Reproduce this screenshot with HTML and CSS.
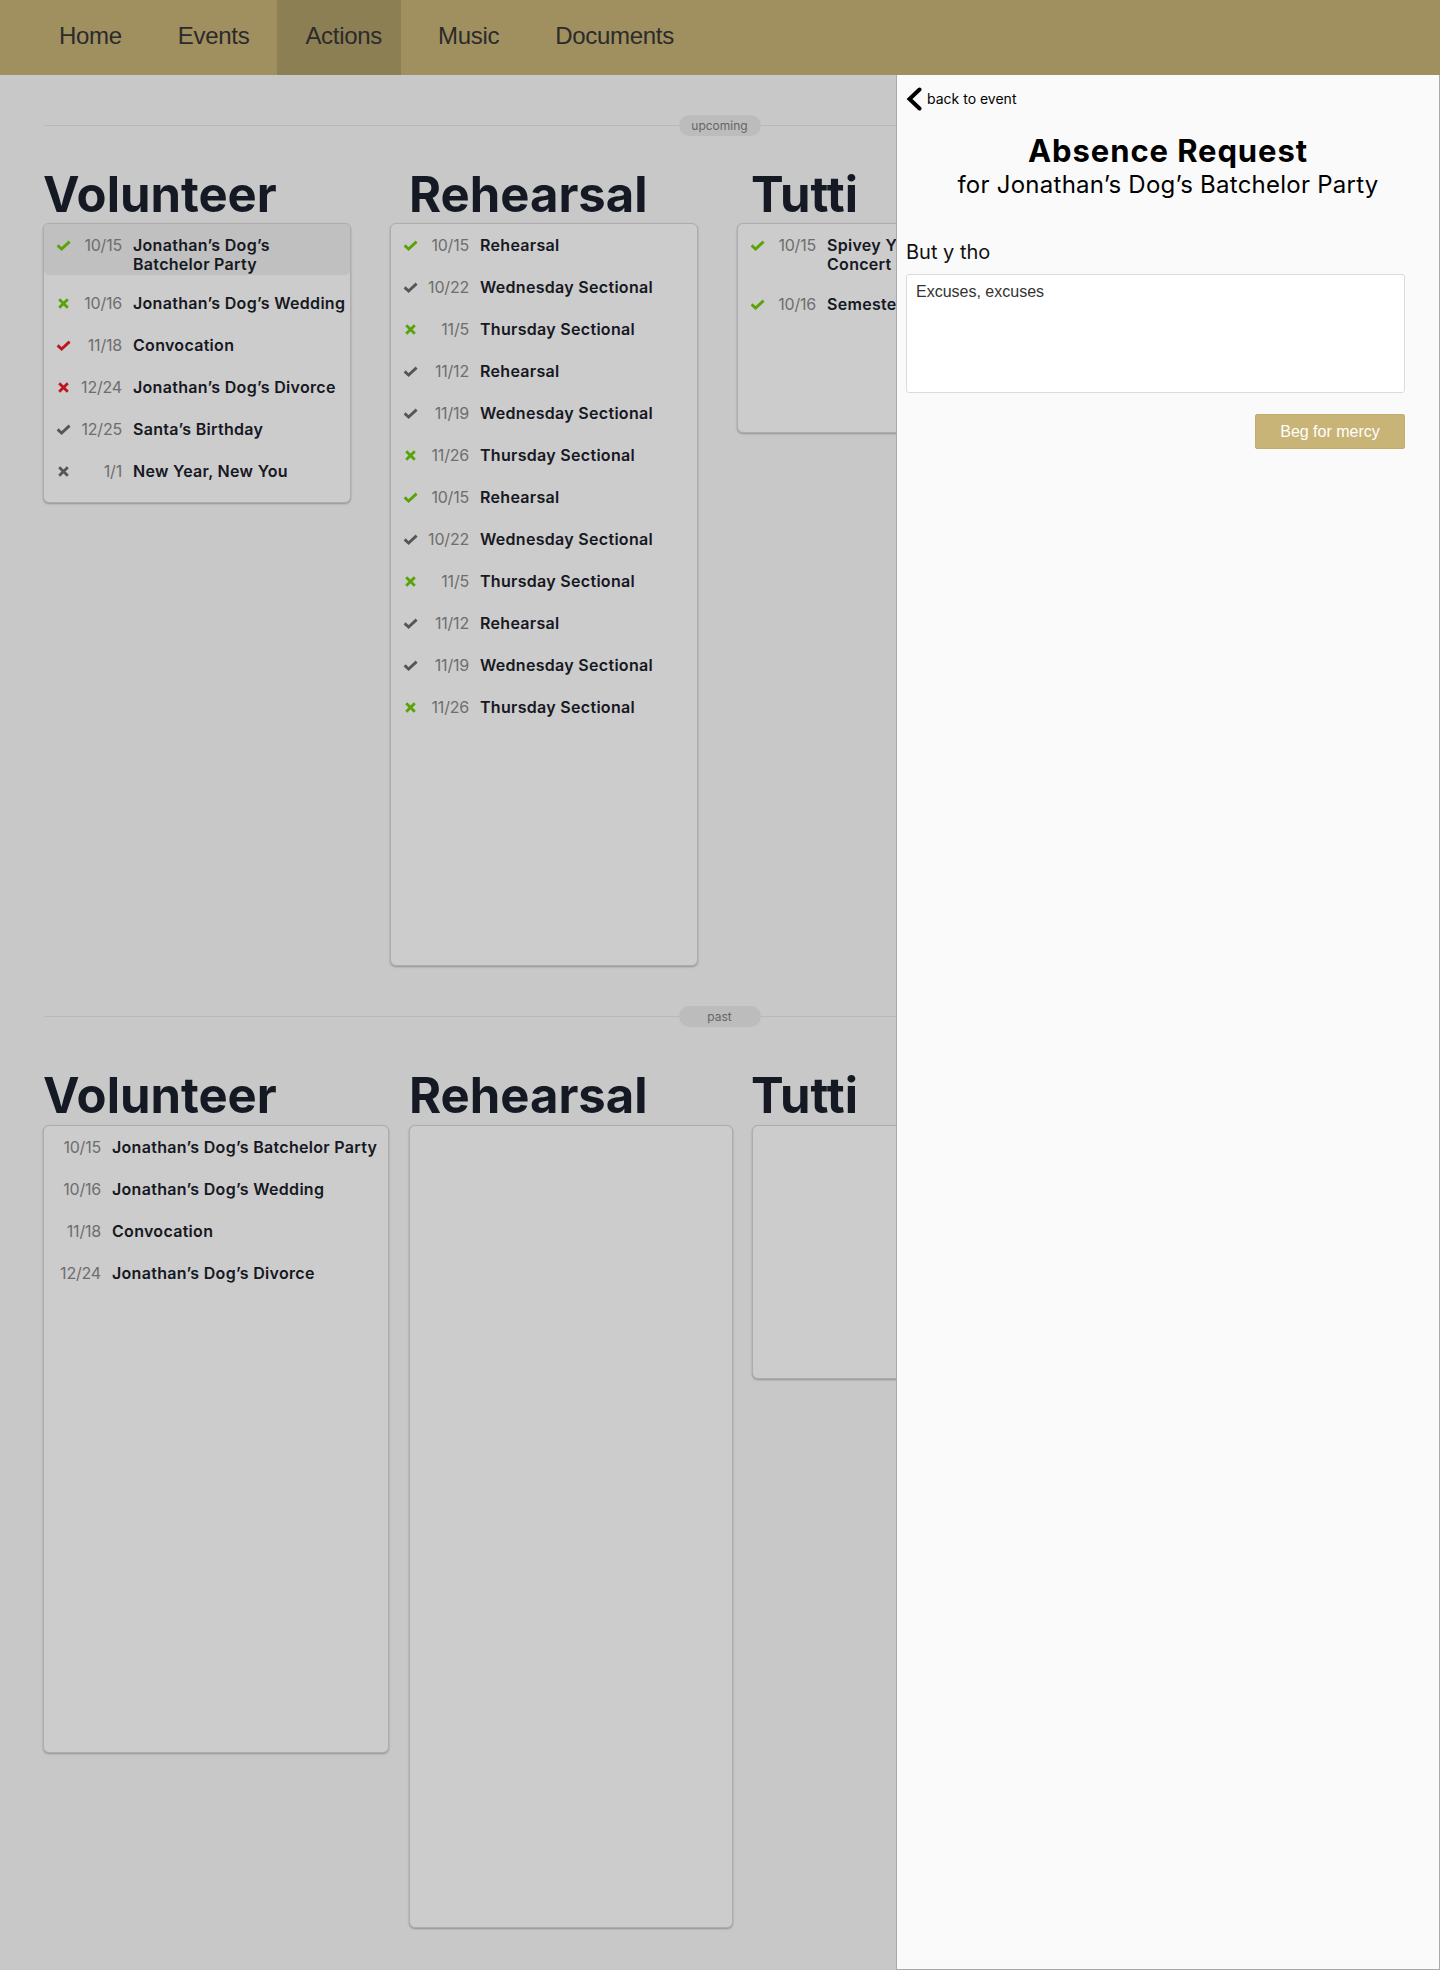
FILE: index.html
```html
<!DOCTYPE html>
<html lang="en">
<head>
<meta charset="utf-8">
<title>Actions</title>
<link rel="stylesheet" href="styles.css">
</head>
<body>
<header class="topnav">
  <nav class="topnav-links">
    <a class="topnav-link" href="#">Home</a>
    <a class="topnav-link" href="#">Events</a>
    <a class="topnav-link is-active" href="#">Actions</a>
    <a class="topnav-link" href="#">Music</a>
    <a class="topnav-link" href="#">Documents</a>
  </nav>
</header>

<main class="board">
  <section class="period">
    <div class="divider"><span class="pill">upcoming</span></div>
    <div class="headings">
      <h2 class="col-title col-title--a">Volunteer</h2>
      <h2 class="col-title col-title--b">Rehearsal</h2>
      <h2 class="col-title">Tutti</h2>
    </div>
    <div class="cards cards--upcoming">
      <ul class="card card--up-vol">
        <li class="row is-selected">
          <span class="icon"><svg class="ic-check green" viewBox="0 0 15 11"><polyline points="1.6,5.4 5.6,9 13.6,1.6"/></svg></span>
          <span class="date">10/15</span>
          <span class="title">Jonathan’s Dog’s Batchelor Party</span>
        </li>
        <li class="row">
          <span class="icon"><svg class="ic-x green" viewBox="0 0 15 11"><path d="M3.2 1.2 L11.8 9.8 M11.8 1.2 L3.2 9.8"/></svg></span>
          <span class="date">10/16</span>
          <span class="title">Jonathan’s Dog’s Wedding</span>
        </li>
        <li class="row">
          <span class="icon"><svg class="ic-check red" viewBox="0 0 15 11"><polyline points="1.6,5.4 5.6,9 13.6,1.6"/></svg></span>
          <span class="date">11/18</span>
          <span class="title">Convocation</span>
        </li>
        <li class="row">
          <span class="icon"><svg class="ic-x red" viewBox="0 0 15 11"><path d="M3.2 1.2 L11.8 9.8 M11.8 1.2 L3.2 9.8"/></svg></span>
          <span class="date">12/24</span>
          <span class="title">Jonathan’s Dog’s Divorce</span>
        </li>
        <li class="row">
          <span class="icon"><svg class="ic-check gray" viewBox="0 0 15 11"><polyline points="1.6,5.4 5.6,9 13.6,1.6"/></svg></span>
          <span class="date">12/25</span>
          <span class="title">Santa’s Birthday</span>
        </li>
        <li class="row">
          <span class="icon"><svg class="ic-x gray" viewBox="0 0 15 11"><path d="M3.2 1.2 L11.8 9.8 M11.8 1.2 L3.2 9.8"/></svg></span>
          <span class="date">1/1</span>
          <span class="title">New Year, New You</span>
        </li>
      </ul>

      <ul class="card card--up-reh">
        <li class="row">
          <span class="icon"><svg class="ic-check green" viewBox="0 0 15 11"><polyline points="1.6,5.4 5.6,9 13.6,1.6"/></svg></span>
          <span class="date">10/15</span><span class="title">Rehearsal</span>
        </li>
        <li class="row">
          <span class="icon"><svg class="ic-check gray" viewBox="0 0 15 11"><polyline points="1.6,5.4 5.6,9 13.6,1.6"/></svg></span>
          <span class="date">10/22</span><span class="title">Wednesday Sectional</span>
        </li>
        <li class="row">
          <span class="icon"><svg class="ic-x green" viewBox="0 0 15 11"><path d="M3.2 1.2 L11.8 9.8 M11.8 1.2 L3.2 9.8"/></svg></span>
          <span class="date">11/5</span><span class="title">Thursday Sectional</span>
        </li>
        <li class="row">
          <span class="icon"><svg class="ic-check gray" viewBox="0 0 15 11"><polyline points="1.6,5.4 5.6,9 13.6,1.6"/></svg></span>
          <span class="date">11/12</span><span class="title">Rehearsal</span>
        </li>
        <li class="row">
          <span class="icon"><svg class="ic-check gray" viewBox="0 0 15 11"><polyline points="1.6,5.4 5.6,9 13.6,1.6"/></svg></span>
          <span class="date">11/19</span><span class="title">Wednesday Sectional</span>
        </li>
        <li class="row">
          <span class="icon"><svg class="ic-x green" viewBox="0 0 15 11"><path d="M3.2 1.2 L11.8 9.8 M11.8 1.2 L3.2 9.8"/></svg></span>
          <span class="date">11/26</span><span class="title">Thursday Sectional</span>
        </li>
        <li class="row">
          <span class="icon"><svg class="ic-check green" viewBox="0 0 15 11"><polyline points="1.6,5.4 5.6,9 13.6,1.6"/></svg></span>
          <span class="date">10/15</span><span class="title">Rehearsal</span>
        </li>
        <li class="row">
          <span class="icon"><svg class="ic-check gray" viewBox="0 0 15 11"><polyline points="1.6,5.4 5.6,9 13.6,1.6"/></svg></span>
          <span class="date">10/22</span><span class="title">Wednesday Sectional</span>
        </li>
        <li class="row">
          <span class="icon"><svg class="ic-x green" viewBox="0 0 15 11"><path d="M3.2 1.2 L11.8 9.8 M11.8 1.2 L3.2 9.8"/></svg></span>
          <span class="date">11/5</span><span class="title">Thursday Sectional</span>
        </li>
        <li class="row">
          <span class="icon"><svg class="ic-check gray" viewBox="0 0 15 11"><polyline points="1.6,5.4 5.6,9 13.6,1.6"/></svg></span>
          <span class="date">11/12</span><span class="title">Rehearsal</span>
        </li>
        <li class="row">
          <span class="icon"><svg class="ic-check gray" viewBox="0 0 15 11"><polyline points="1.6,5.4 5.6,9 13.6,1.6"/></svg></span>
          <span class="date">11/19</span><span class="title">Wednesday Sectional</span>
        </li>
        <li class="row">
          <span class="icon"><svg class="ic-x green" viewBox="0 0 15 11"><path d="M3.2 1.2 L11.8 9.8 M11.8 1.2 L3.2 9.8"/></svg></span>
          <span class="date">11/26</span><span class="title">Thursday Sectional</span>
        </li>
      </ul>

      <ul class="card card--up-tutti">
        <li class="row">
          <span class="icon"><svg class="ic-check green" viewBox="0 0 15 11"><polyline points="1.6,5.4 5.6,9 13.6,1.6"/></svg></span>
          <span class="date">10/15</span><span class="title">Spivey Young Artists Concert</span>
        </li>
        <li class="row">
          <span class="icon"><svg class="ic-check green" viewBox="0 0 15 11"><polyline points="1.6,5.4 5.6,9 13.6,1.6"/></svg></span>
          <span class="date">10/16</span><span class="title">Semester Concert</span>
        </li>
      </ul>
    </div>
  </section>

  <section class="period period--past">
    <div class="divider"><span class="pill">past</span></div>
    <div class="headings">
      <h2 class="col-title col-title--a">Volunteer</h2>
      <h2 class="col-title col-title--b">Rehearsal</h2>
      <h2 class="col-title">Tutti</h2>
    </div>
    <div class="cards cards--past">
      <ul class="card card--past-vol">
        <li class="row row--plain"><span class="date">10/15</span><span class="title">Jonathan’s Dog’s Batchelor Party</span></li>
        <li class="row row--plain"><span class="date">10/16</span><span class="title">Jonathan’s Dog’s Wedding</span></li>
        <li class="row row--plain"><span class="date">11/18</span><span class="title">Convocation</span></li>
        <li class="row row--plain"><span class="date">12/24</span><span class="title">Jonathan’s Dog’s Divorce</span></li>
      </ul>
      <ul class="card card--past-reh"></ul>
      <ul class="card card--past-tutti"></ul>
    </div>
  </section>
</main>

<div class="backdrop"></div>

<aside class="drawer">
  <a class="back-link" href="#">
    <svg class="back-chevron" viewBox="0 0 16 24"><polyline points="13.5,2.5 3.5,12 13.5,21.5"/></svg>
    <span>back to event</span>
  </a>
  <header class="drawer-head">
    <h1 class="drawer-title">Absence Request</h1>
    <p class="drawer-sub">for Jonathan’s Dog’s Batchelor Party</p>
  </header>
  <form class="drawer-form">
    <label class="field-label" for="reason">But y tho</label>
    <textarea class="field-text" id="reason">Excuses, excuses</textarea>
    <div class="form-actions">
      <button class="btn-submit" type="button">Beg for mercy</button>
    </div>
  </form>
</aside>
</body>
</html>
```

FILE: styles.css
```css
* { box-sizing: border-box; }

html, body {
  margin: 0;
  padding: 0;
}

body {
  background: #fafafa;
  font-family: "Inter", "Noto Sans", sans-serif;
  color: #1a202c;
  height: 1970px;
  overflow: hidden;
}

/* ---------- top navigation ---------- */
.topnav {
  height: 75px;
  background: #c8b377;
}

.topnav-links {
  display: flex;
  height: 75px;
  padding-left: 31px;
}

.topnav-link {
  display: block;
  height: 75px;
  line-height: 72px;
  padding: 0 28px;
  font-family: "Liberation Sans", Arial, sans-serif;
  font-size: 24px;
  letter-spacing: -0.3px;
  color: #363636;
  text-decoration: none;
}

.topnav-link.is-active {
  background: #b09f6a;
  padding-right: 19px;
  margin-right: 9px;
}

/* ---------- board ---------- */
.board {
  display: flex;
  flex-direction: column;
}

.period {
  padding-top: 40px;
}

.divider {
  display: flex;
  align-items: center;
  margin: 0 44px;
  height: 21px;
}

.divider::before,
.divider::after {
  content: "";
  flex: 1;
  height: 1px;
  background: #e8e8e8;
}

.pill {
  width: 82px;
  height: 21px;
  line-height: 21px;
  border-radius: 11px;
  background: #ebebeb;
  color: #808080;
  font-size: 12px;
  text-align: center;
  flex: none;
  margin-left: -1px;
}

.headings {
  display: flex;
  margin-top: 34px;
  padding-left: 43px;
}

.period--past .headings {
  margin-top: 44px;
}

.col-title {
  margin: 0;
  font-size: 49px;
  line-height: 49px;
  font-weight: 700;
  color: #1a202c;
  letter-spacing: 0;
}

.col-title--a { width: 366px; }
.col-title--b { width: 342px; }

.cards {
  display: flex;
  align-items: flex-start;
  padding-left: 43px;
  margin-top: 4px;
}

.cards--upcoming { gap: 39px; }
.cards--past { gap: 19.5px; margin-top: 5px; }

.card {
  list-style: none;
  margin: 0;
  padding: 0;
  background: #ffffff;
  border: 1px solid #d9d9d9;
  border-radius: 6px;
  box-shadow: 0 1px 2px rgba(0, 0, 0, 0.28);
  flex: none;
}

.card--up-vol   { width: 308px; height: 280px; }
.card--up-reh   { width: 308px; height: 743px; }
.card--up-tutti { width: 308px; height: 210px; }

.card--past-vol   { width: 346px; height: 628px; }
.card--past-reh   { width: 324px; height: 803px; }
.card--past-tutti { width: 308px; height: 254px; }

/* ---------- rows ---------- */
.row {
  display: flex;
  align-items: baseline;
  padding: 9px 3px 9px 12px;
  font-size: 16px;
}

.row.is-selected {
  background: #f0f0f0;
  border-radius: 5px;
  padding-bottom: 1px;
  margin-bottom: 7px;
}

.icon {
  flex: none;
  width: 15px;
  margin-right: 6px;
  display: inline-flex;
}

.icon svg {
  width: 15px;
  height: 11px;
  fill: none;
  stroke-width: 2.8;
}

.ic-check { stroke-linecap: butt; stroke-linejoin: miter; }
.ic-x { stroke-linecap: butt; }

.green { stroke: #70cc0c; }
.red   { stroke: #f01b26; }
.gray  { stroke: #6c6c6c; }

.date {
  flex: none;
  width: 45px;
  text-align: right;
  line-height: 24px;
  color: #8a8a8a;
  font-weight: 400;
  letter-spacing: -0.2px;
}

.title {
  flex: 1;
  min-width: 0;
  margin-left: 11px;
  line-height: 19px;
  font-weight: 600;
  letter-spacing: 0.3px;
  color: #1b212b;
}

/* ---------- modal backdrop ---------- */
.backdrop {
  position: fixed;
  inset: 0;
  background: rgba(0, 0, 0, 0.2);
  z-index: 10;
}

/* ---------- drawer ---------- */
.drawer {
  position: fixed;
  top: 75px;
  right: 0;
  bottom: 0;
  width: 544px;
  background: #fafafa;
  border: 1px solid #a9a9a9;
  border-top: none;
  z-index: 20;
  display: flex;
  flex-direction: column;
}

.back-link {
  display: flex;
  align-items: center;
  gap: 5px;
  margin: 12px 0 0 9px;
  color: #000;
  text-decoration: none;
  font-size: 14px;
  line-height: 24px;
  align-self: flex-start;
}

.back-chevron {
  width: 16px;
  height: 24px;
  fill: none;
  stroke: #000;
  stroke-width: 4;
  stroke-linecap: round;
  stroke-linejoin: miter;
}

.drawer-head {
  text-align: center;
  margin-top: 22px;
}

.drawer-title {
  margin: 0;
  font-size: 31px;
  line-height: 36px;
  font-weight: 700;
  letter-spacing: 0.9px;
  color: #000;
}

.drawer-sub {
  margin: 1px 0 0;
  font-size: 24px;
  line-height: 30px;
  font-weight: 400;
  letter-spacing: 0.25px;
  color: #000;
}

.drawer-form {
  display: flex;
  flex-direction: column;
  padding: 0 34px 0 9px;
  margin-top: 40px;
}

.field-label {
  font-size: 20px;
  line-height: 24px;
  color: #111;
}

.field-text {
  margin-top: 10px;
  height: 119px;
  width: 100%;
  resize: none;
  background: #fff;
  border: 1px solid #dcdcdc;
  border-radius: 3px;
  padding: 8px 9px;
  font-family: "Liberation Sans", Arial, sans-serif;
  font-size: 16px;
  line-height: 18px;
  color: #333;
}

.form-actions {
  display: flex;
  justify-content: flex-end;
  margin-top: 21px;
}

.btn-submit {
  width: 150px;
  height: 35px;
  background: #c9b477;
  border: 1px solid #c2ad70;
  border-radius: 2px;
  color: #fff;
  font-family: "Liberation Sans", Arial, sans-serif;
  font-size: 16px;
  padding: 0;
}
```
